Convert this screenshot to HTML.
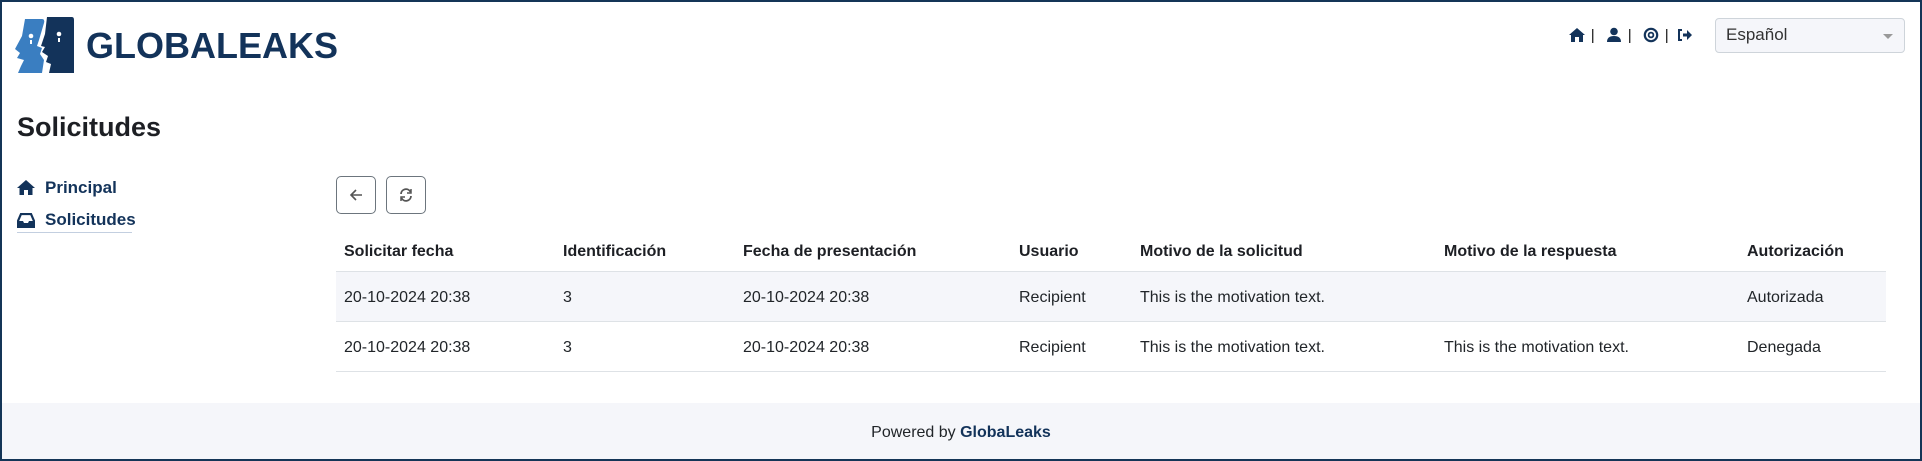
<!DOCTYPE html>
<html><head><meta charset="utf-8"><style>
*{margin:0;padding:0;box-sizing:border-box}
html,body{width:1922px;height:461px;overflow:hidden;background:#fff}
body{font-family:"Liberation Sans",sans-serif;color:#212529;position:relative}
.frame{position:absolute;left:0;top:0;width:1922px;height:461px;border:2px solid #143557;pointer-events:none;z-index:5}
.abs{position:absolute;white-space:nowrap}
.logo-t{left:86px;top:28px;font-size:36px;line-height:36px;font-weight:bold;color:#13335a;letter-spacing:0}
h1{position:absolute;left:17px;top:112px;font-size:27px;font-weight:bold;color:#1d1f24}
.nav{font-size:17px;font-weight:bold;color:#13335a}
.btn{position:absolute;top:176px;width:40px;height:38px;border:1px solid #6c757d;border-radius:5px}
.th{font-size:16px;font-weight:bold;color:#1d1f24;top:243px}
.td{font-size:16px;color:#212529}
.hl{position:absolute;left:336px;width:1550px;height:1px;background:#dee2e6}
</style></head><body>
<div class="frame"></div>
<svg class="abs" style="left:15px;top:16px" width="60" height="58" viewBox="0 0 60 58">
<path d="M10 3 L27 3 Q30 3 29 7 L24 24 L22 30 L27 32 L25 38 L29 44 L27 57 L3 57 L6 50 L9 44 L2 42 L5 37 L0 33 L7 20 Z" fill="#3a7ec1"/>
<circle cx="16" cy="20" r="2.3" fill="#fff"/><rect x="15" y="24" width="2" height="4" fill="#fff"/>
<path d="M32 1 L57 1 Q59 1 59 4 L59 57 L34 57 L36 48 L31 46 L33 40 L27 36 L30 31 L26 30 L30 18 Z" fill="#13335a"/>
<circle cx="44" cy="18" r="2.3" fill="#fff"/><rect x="43" y="22" width="2" height="4" fill="#fff"/>
</svg>
<div class="abs logo-t">GLOBALEAKS</div>
<svg class="abs" style="left:1568px;top:26px" width="135" height="18" viewBox="0 0 135 18" fill="#13335a">
<path d="M1 9 L9 2 L17 9 L15 9 L15 16 L11 16 L11 11 L7 11 L7 16 L3 16 L3 9 Z"/>
<rect x="24" y="3" width="1.4" height="14" fill="#333"/>
<circle cx="46" cy="5.5" r="3.8"/><path d="M39 16 Q39 10 46 10 Q53 10 53 16 Z"/>
<rect x="61" y="3" width="1.4" height="14" fill="#333"/>
<circle cx="83" cy="9" r="6.2" fill="none" stroke="#13335a" stroke-width="2.2"/><circle cx="83" cy="9" r="2.4" fill="none" stroke="#13335a" stroke-width="1.8"/>
<rect x="98" y="3" width="1.4" height="14" fill="#333"/>
<path d="M110 3 L114 3 L114 5 L112 5 L112 13 L114 13 L114 15 L110 15 Z"/><path d="M115 7.5 L119 7.5 L119 4 L124 9 L119 14 L119 10.5 L115 10.5 Z"/>
</svg>
<div class="abs" style="left:1715px;top:18px;width:190px;height:35px;border:1px solid #ced4da;border-radius:4px;background:#f5f6fa"></div>
<div class="abs" style="left:1726px;top:25px;font-size:17px;color:#333">Español</div>
<div class="abs" style="left:1883px;top:34px;width:0;height:0;border-left:5px solid transparent;border-right:5px solid transparent;border-top:5px solid #999"></div>
<h1>Solicitudes</h1>
<svg class="abs" style="left:17px;top:180px" width="18" height="16" viewBox="0 0 18 16" fill="#13335a"><path d="M0 8 L9 0 L18 8 L15.5 8 L15.5 15 L11 15 L11 10 L7 10 L7 15 L2.5 15 L2.5 8 Z"/></svg>
<div class="abs nav" style="left:45px;top:178px">Principal</div>
<svg class="abs" style="left:17px;top:213px" width="18" height="15" viewBox="0 0 18 15"><path d="M1 8 L4 1 L14 1 L17 8 L17 14 L1 14 Z" fill="none" stroke="#13335a" stroke-width="2.2"/><path d="M1 8 L6 8 L7 10 L11 10 L12 8 L17 8 L17 14 L1 14Z" fill="#13335a"/></svg>
<div class="abs nav" style="left:45px;top:210px">Solicitudes</div>
<div class="abs" style="left:17px;top:232px;width:115px;height:1px;background:#c3cfe0"></div>
<div class="btn" style="left:336px"></div>
<svg class="abs" style="left:349px;top:188px" width="14" height="14" viewBox="0 0 14 14"><path d="M13 7 L2 7 M7 2 L2 7 L7 12" fill="none" stroke="#555" stroke-width="1.6"/></svg>
<div class="btn" style="left:386px"></div>
<svg class="abs" style="left:399px;top:188px" width="14" height="14" viewBox="0 0 14 14" fill="none" stroke="#555" stroke-width="1.8"><path d="M2 6 A5 5 0 0 1 11.5 4"/><path d="M12 8 A5 5 0 0 1 2.5 10"/><path d="M12 1 L12 5 L8 5" stroke-width="1.5"/><path d="M2 13 L2 9 L6 9" stroke-width="1.5"/></svg>
<div class="abs th" style="left:344px">Solicitar fecha</div>
<div class="abs th" style="left:563px">Identificación</div>
<div class="abs th" style="left:743px">Fecha de presentación</div>
<div class="abs th" style="left:1019px">Usuario</div>
<div class="abs th" style="left:1140px">Motivo de la solicitud</div>
<div class="abs th" style="left:1444px">Motivo de la respuesta</div>
<div class="abs th" style="left:1747px">Autorización</div>
<div class="abs" style="left:336px;top:271px;width:1550px;height:50px;background:#f5f6fa"></div>
<div class="hl" style="top:271px"></div>
<div class="hl" style="top:321px"></div>
<div class="hl" style="top:371px"></div>
<div class="abs td" style="left:344px;top:289px">20-10-2024 20:38</div>
<div class="abs td" style="left:563px;top:289px">3</div>
<div class="abs td" style="left:743px;top:289px">20-10-2024 20:38</div>
<div class="abs td" style="left:1019px;top:289px">Recipient</div>
<div class="abs td" style="left:1140px;top:289px">This is the motivation text.</div>
<div class="abs td" style="left:1747px;top:289px">Autorizada</div>
<div class="abs td" style="left:344px;top:339px">20-10-2024 20:38</div>
<div class="abs td" style="left:563px;top:339px">3</div>
<div class="abs td" style="left:743px;top:339px">20-10-2024 20:38</div>
<div class="abs td" style="left:1019px;top:339px">Recipient</div>
<div class="abs td" style="left:1140px;top:339px">This is the motivation text.</div>
<div class="abs td" style="left:1444px;top:339px">This is the motivation text.</div>
<div class="abs td" style="left:1747px;top:339px">Denegada</div>
<div class="abs" style="left:0;top:403px;width:1922px;height:58px;background:#f5f6fa"></div>
<div class="abs" style="left:0;top:424px;width:1922px;text-align:center;font-size:16px;color:#212529">Powered by <b style="color:#13335a">GlobaLeaks</b></div>
</body></html>
